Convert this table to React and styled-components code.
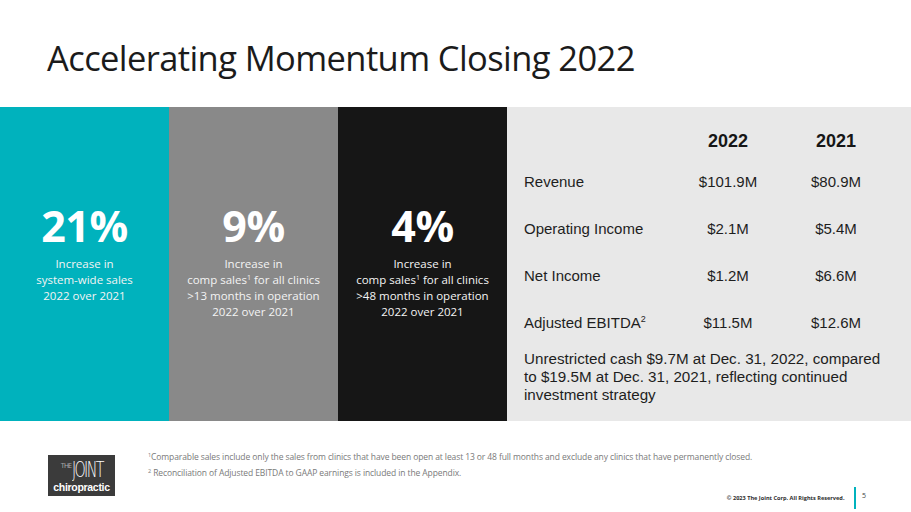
import React from "react";
import styled, { createGlobalStyle } from "styled-components";

const GlobalStyle = createGlobalStyle`
  html, body {
    margin: 0;
    padding: 0;
    background: #ffffff;
  }
  body {
    font-family: "Open Sans", "Liberation Sans", sans-serif;
  }
`;

const Slide = styled.div`
  width: 911px;
  height: 512px;
  overflow: hidden;
  display: flex;
  flex-direction: column;
  background: #ffffff;
`;

const Header = styled.div`
  height: 107px;
  padding-left: 47px;
  display: flex;
  align-items: center;
  box-sizing: border-box;
  padding-top: 8px;
`;

const Title = styled.h1`
  margin: 0;
  font-family: "Open Sans", sans-serif;
  font-weight: 400;
  font-size: 34.5px;
  letter-spacing: -0.6px;
  color: #1b1b1b;
`;

const PanelRow = styled.div`
  height: 314px;
  display: flex;
`;

const StatPanel = styled.div`
  width: 169px;
  background: ${(props) => props.bg};
  color: #ffffff;
  display: flex;
  flex-direction: column;
  align-items: center;
  padding-top: 93px;
  box-sizing: border-box;
`;

const BigNumber = styled.div`
  font-family: "Open Sans", sans-serif;
  font-weight: 700;
  font-size: 43px;
  line-height: 52px;
  letter-spacing: -0.5px;
`;

const StatText = styled.div`
  margin-top: 4px;
  font-family: "Open Sans", sans-serif;
  font-size: 11.5px;
  line-height: 16px;
  text-align: center;
  color: #f4f4f4;
  sup {
    font-size: 7px;
    vertical-align: 4px;
    line-height: 0;
  }
`;

const TablePanel = styled.div`
  flex: 1;
  background: #e8e8e8;
  padding: 18px 0 0 17px;
  box-sizing: border-box;
  font-family: "Liberation Sans", Arial, sans-serif;
  color: #1e1e1e;
`;

const Table = styled.div`
  display: grid;
  grid-template-columns: 150px 108px 108px;
  grid-template-rows: 33px repeat(4, 47px);
  align-items: center;
`;

const HeadCell = styled.div`
  font-weight: 700;
  font-size: 18px;
  text-align: center;
  color: #161616;
`;

const Cell = styled.div`
  font-size: 15px;
  text-align: ${(props) => (props.label ? "left" : "center")};
  sup {
    font-size: 9px;
    vertical-align: 6px;
    line-height: 0;
  }
`;

const CashNote = styled.p`
  margin: 4px 0 0;
  font-size: 15.2px;
  line-height: 18px;
`;

const Footer = styled.div`
  flex: 1;
  display: grid;
  grid-template-columns: 100px 1fr;
  padding: 28px 45px 0 48px;
  box-sizing: border-box;
`;

const Logo = styled.div`
  margin-top: 6px;
  width: 67px;
  height: 41px;
  background: #3b3b3b;
  color: #ffffff;
  display: flex;
  flex-direction: column;
  align-items: center;
  justify-content: center;
  font-family: "DejaVu Sans", sans-serif;
`;

const LogoTop = styled.div`
  display: flex;
  align-items: flex-start;
`;

const LogoThe = styled.span`
  font-size: 6.5px;
  line-height: 8px;
  font-weight: 300;
  letter-spacing: -0.8px;
  margin-top: 4px;
  margin-right: 1px;
`;

const LogoJoint = styled.span`
  font-family: "DejaVu Sans", sans-serif;
  font-size: 19px;
  line-height: 23px;
  font-weight: 200;
  letter-spacing: -2.2px;
  display: inline-block;
  transform: scaleX(0.75) scaleY(1.1);
  transform-origin: left center;
  margin-right: -11px;
`;

const LogoSub = styled.div`
  font-family: "Liberation Sans", Arial, sans-serif;
  font-weight: 700;
  font-size: 10.5px;
  letter-spacing: -0.3px;
  line-height: 12px;
`;

const Notes = styled.div`
  display: flex;
  flex-direction: column;
`;

const Footnote = styled.div`
  font-family: "Open Sans", sans-serif;
  font-size: 8.5px;
  line-height: 16px;
  color: #7a7a7a;
  letter-spacing: -0.1px;
  sup {
    font-size: 5.5px;
    vertical-align: 3px;
    line-height: 0;
  }
`;

const CopyRow = styled.div`
  margin-top: 6px;
  display: flex;
  justify-content: flex-end;
  align-items: center;
  height: 22px;
`;

const Copyright = styled.span`
  font-family: "Open Sans", sans-serif;
  font-weight: 700;
  font-size: 5.6px;
  color: #2d2d2d;
`;

const Divider = styled.span`
  width: 1.5px;
  height: 22px;
  background: #00b2bd;
  margin: 0 6px 0 10px;
`;

const PageNum = styled.span`
  font-family: "Open Sans", sans-serif;
  font-size: 7px;
  color: #444;
  align-self: flex-start;
  margin-top: 4px;
`;

const stats = [
  {
    bg: "#00b2bd",
    value: "21%",
    lines: ["Increase in", "system-wide sales", "2022 over 2021"],
  },
  {
    bg: "#898989",
    value: "9%",
    lines: ["Increase in", null, ">13 months in operation", "2022 over 2021"],
  },
  {
    bg: "#161616",
    value: "4%",
    lines: ["Increase in", null, ">48 months in operation", "2022 over 2021"],
  },
];

const rows = [
  ["Revenue", "$101.9M", "$80.9M"],
  ["Operating Income", "$2.1M", "$5.4M"],
  ["Net Income", "$1.2M", "$6.6M"],
  ["Adjusted EBITDA", "$11.5M", "$12.6M"],
];

const App = () => {
  return (
    <>
      <GlobalStyle />
      <Slide>
        <Header>
          <Title>Accelerating Momentum Closing 2022</Title>
        </Header>

        <PanelRow>
          {stats.map((stat) => (
            <StatPanel bg={stat.bg} key={stat.value}>
              <BigNumber>{stat.value}</BigNumber>
              <StatText>
                {stat.lines.map((line, i) =>
                  line === null ? (
                    <div key={i}>
                      comp sales<sup>1</sup> for all clinics
                    </div>
                  ) : (
                    <div key={i}>{line}</div>
                  )
                )}
              </StatText>
            </StatPanel>
          ))}

          <TablePanel>
            <Table>
              <div />
              <HeadCell>2022</HeadCell>
              <HeadCell>2021</HeadCell>
              {rows.map((row, i) => (
                <React.Fragment key={row[0]}>
                  <Cell label>
                    {row[0]}
                    {i === 3 && <sup>2</sup>}
                  </Cell>
                  <Cell>{row[1]}</Cell>
                  <Cell>{row[2]}</Cell>
                </React.Fragment>
              ))}
            </Table>
            <CashNote>
              Unrestricted cash $9.7M at Dec. 31, 2022, compared
              <br />
              to $19.5M at Dec. 31, 2021, reflecting continued
              <br />
              investment strategy
            </CashNote>
          </TablePanel>
        </PanelRow>

        <Footer>
          <div>
            <Logo>
              <LogoTop>
                <LogoThe>THE</LogoThe>
                <LogoJoint>JOINT</LogoJoint>
              </LogoTop>
              <LogoSub>chiropractic</LogoSub>
            </Logo>
          </div>
          <Notes>
            <Footnote>
              <sup>1</sup>Comparable sales include only the sales from clinics
              that have been open at least 13 or 48 full months and exclude any
              clinics that have permanently closed.
            </Footnote>
            <Footnote>
              <sup>2</sup> Reconciliation of Adjusted EBITDA to GAAP earnings is
              included in the Appendix.
            </Footnote>
            <CopyRow>
              <Copyright>© 2023 The Joint Corp. All Rights Reserved.</Copyright>
              <Divider />
              <PageNum>5</PageNum>
            </CopyRow>
          </Notes>
        </Footer>
      </Slide>
    </>
  );
};

export default App;
